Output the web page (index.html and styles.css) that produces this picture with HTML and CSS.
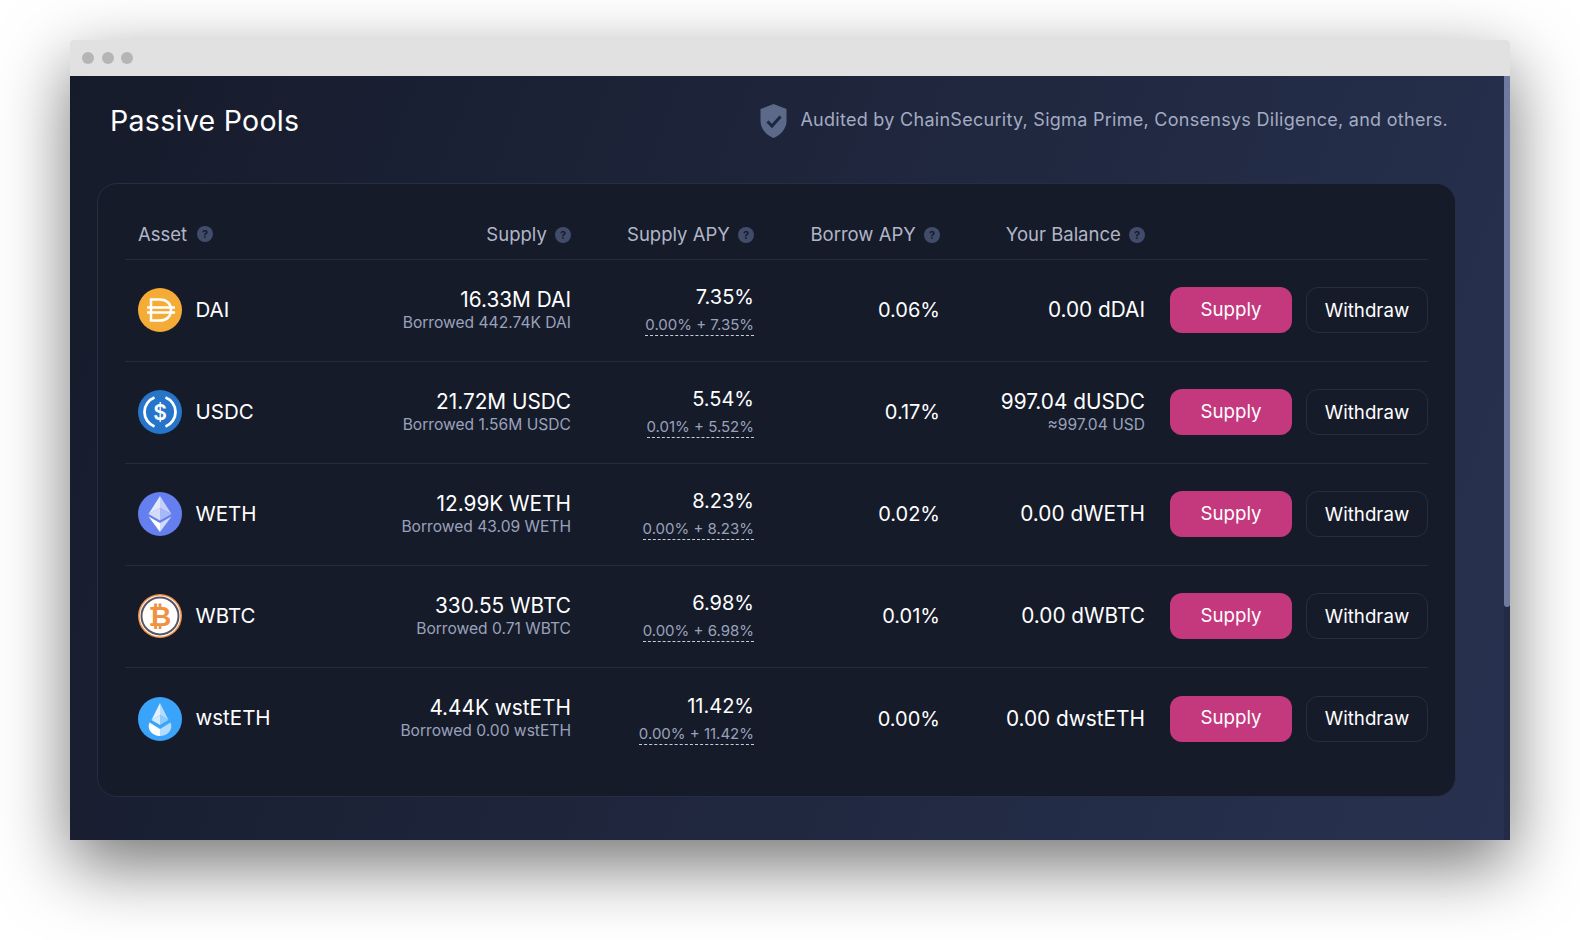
FILE: index.html

```html
<!doctype html>
<html lang="en">
<head>
    <meta charset="UTF-8">
    <title>Passive Pools</title>
    <link rel="stylesheet" href="styles.css">
</head>
<body>

<div class="window">
    <div class="titlebar">
        <span class="dot"></span>
        <span class="dot"></span>
        <span class="dot"></span>
    </div>

    <div class="viewport">
        <div class="content">
            <div class="page-head">
                <h1>Passive Pools</h1>
                <div class="audit">
                    <svg class="shield" viewBox="0 0 26 34">
                        <path d="M13 0 L26 5 V17 C26 25 20 31 13 34 C6 31 0 25 0 17 V5 Z" fill="#5c6989"/>
                        <path d="M7 17.5 L11.5 22 L20 12.5" fill="none" stroke="#1e2640" stroke-width="3"/>
                    </svg>
                    <span class="audit-text">Audited by ChainSecurity, Sigma Prime, Consensys Diligence, and others.</span>
                </div>
            </div>

            <div class="card">
                <div class="row head-row">
                    <div class="asset">Asset <span class="help">?</span></div>
                    <div class="num">Supply <span class="help">?</span></div>
                    <div class="num">Supply APY <span class="help">?</span></div>
                    <div class="num">Borrow APY <span class="help">?</span></div>
                    <div class="num">Your Balance <span class="help">?</span></div>
                    <div></div>
                </div>

                <div class="row">
                    <div class="asset">
                        <svg class="coin" viewBox="0 0 44 44">
                            <circle cx="22" cy="22" r="22" fill="#f5ac37"/>
                            <path d="M13 11.5 H22 C29 11.500 33 16 33 22 C33 28 29 32.500 22 32.500 H13 Z" fill="none" stroke="#fff" stroke-width="2.500"/>
                            <path d="M9 19.500 H37 M9 24.500 H37" stroke="#fff" stroke-width="2.500"/>
                        </svg>
                        <span class="name">DAI</span>
                    </div>
                    <div class="num"><div class="main">16.33M DAI</div><div class="sub">Borrowed 442.74K DAI</div></div>
                    <div class="num"><div class="main pct">7.35%</div><div class="sub apy"><span class="dashed">0.00% + 7.35%</span></div></div>
                    <div class="num"><div class="main pct">0.06%</div></div>
                    <div class="num"><div class="main">0.00 dDAI</div></div>
                    <div class="actions"><button class="btn supply">Supply</button><button class="btn withdraw">Withdraw</button></div>
                </div>

                <div class="row">
                    <div class="asset">
                        <svg class="coin" viewBox="0 0 44 44">
                            <circle cx="22" cy="22" r="22" fill="#2775ca"/>
                            <path d="M16.500 7.500 A15.500 15.500 0 0 0 16.500 36.500 M27.500 7.500 A15.500 15.500 0 0 1 27.500 36.500" fill="none" stroke="#fff" stroke-width="2.800"/>
                            <text x="22" y="29.500" text-anchor="middle" class="coin-dollar">$</text>
                        </svg>
                        <span class="name">USDC</span>
                    </div>
                    <div class="num"><div class="main">21.72M USDC</div><div class="sub">Borrowed 1.56M USDC</div></div>
                    <div class="num"><div class="main pct">5.54%</div><div class="sub apy"><span class="dashed">0.01% + 5.52%</span></div></div>
                    <div class="num"><div class="main pct">0.17%</div></div>
                    <div class="num"><div class="main">997.04 dUSDC</div><div class="sub">≈997.04 USD</div></div>
                    <div class="actions"><button class="btn supply">Supply</button><button class="btn withdraw">Withdraw</button></div>
                </div>

                <div class="row">
                    <div class="asset">
                        <svg class="coin" viewBox="0 0 44 44">
                            <circle cx="22" cy="22" r="22" fill="#6580ee"/>
                            <path d="M22 4 V16 L10.500 22 Z" fill="#e4e9fc"/>
                            <path d="M22 4 V16 L33.500 22 Z" fill="#c4cffa"/>
                            <path d="M22 16 L10.500 22 L22 28.500 Z" fill="#d5dcfb"/>
                            <path d="M22 16 L33.500 22 L22 28.500 Z" fill="#a9b8f6"/>
                            <path d="M10.500 24.500 L22 31 V40 Z" fill="#fff"/>
                            <path d="M33.500 24.500 L22 31 V40 Z" fill="#d3dbfb"/>
                        </svg>
                        <span class="name">WETH</span>
                    </div>
                    <div class="num"><div class="main">12.99K WETH</div><div class="sub">Borrowed 43.09 WETH</div></div>
                    <div class="num"><div class="main pct">8.23%</div><div class="sub apy"><span class="dashed">0.00% + 8.23%</span></div></div>
                    <div class="num"><div class="main pct">0.02%</div></div>
                    <div class="num"><div class="main">0.00 dWETH</div></div>
                    <div class="actions"><button class="btn supply">Supply</button><button class="btn withdraw">Withdraw</button></div>
                </div>

                <div class="row">
                    <div class="asset">
                        <svg class="coin" viewBox="0 0 44 44">
                            <circle cx="22" cy="22" r="22" fill="#f09242"/>
                            <circle cx="22" cy="22" r="20.500" fill="#fff"/>
                            <circle cx="22" cy="22" r="18.500" fill="none" stroke="#5a5564" stroke-width="2"/>
                            <text x="22" y="31.500" text-anchor="middle" class="coin-btc">₿</text>
                        </svg>
                        <span class="name">WBTC</span>
                    </div>
                    <div class="num"><div class="main">330.55 WBTC</div><div class="sub">Borrowed 0.71 WBTC</div></div>
                    <div class="num"><div class="main pct">6.98%</div><div class="sub apy"><span class="dashed">0.00% + 6.98%</span></div></div>
                    <div class="num"><div class="main pct">0.01%</div></div>
                    <div class="num"><div class="main">0.00 dWBTC</div></div>
                    <div class="actions"><button class="btn supply">Supply</button><button class="btn withdraw">Withdraw</button></div>
                </div>

                <div class="row last-row">
                    <div class="asset">
                        <svg class="coin" viewBox="0 0 44 44">
                            <circle cx="22" cy="22" r="22" fill="#3aa4fa"/>
                            <path d="M22 6 V18 L13.500 23 Z" fill="#e3f2fe"/>
                            <path d="M22 6 V18 L30.500 23 Z" fill="#b3dcfd"/>
                            <path d="M22 18 L13.500 23 L22 28 Z" fill="#d3ebfe"/>
                            <path d="M22 18 L30.500 23 L22 28 Z" fill="#8fcbfc"/>
                            <path d="M11.500 25.500 L22 32 V39 C14 39 8.500 32 11.500 25.500 Z" fill="#fff"/>
                            <path d="M32.500 25.500 L22 32 V39 C30 39 35.500 32 32.500 25.500 Z" fill="#b3dcfd"/>
                        </svg>
                        <span class="name">wstETH</span>
                    </div>
                    <div class="num"><div class="main">4.44K wstETH</div><div class="sub">Borrowed 0.00 wstETH</div></div>
                    <div class="num"><div class="main pct">11.42%</div><div class="sub apy"><span class="dashed">0.00% + 11.42%</span></div></div>
                    <div class="num"><div class="main pct">0.00%</div></div>
                    <div class="num"><div class="main">0.00 dwstETH</div></div>
                    <div class="actions"><button class="btn supply">Supply</button><button class="btn withdraw">Withdraw</button></div>
                </div>
            </div>
        </div>

        <div class="scrollbar"><div class="thumb"></div></div>
    </div>
</div>

</body>
</html>
```

FILE: styles.css

```css
* {
    box-sizing: border-box;
}
html, body {
    height: 100%;
}
body {
    margin: 0;
    padding: 40px 70px 0;
    overflow: hidden;
    background: #fff;
    font-family: Inter, "Liberation Sans", sans-serif;
    color: #fff;
}

.window {
    height: 800px;
    border-radius: 4px 4px 0 0;
    box-shadow: 0 25px 70px rgba(0, 0, 0, .55);
    display: flex;
    flex-direction: column;
}
.titlebar {
    height: 36px;
    flex: none;
    padding-left: 12px;
    display: flex;
    align-items: center;
    gap: 7.500px;
    background: #e1e1e1;
    border-radius: 4px 4px 0 0;
}
.dot {
    width: 12px;
    height: 12px;
    border-radius: 50%;
    background: #b5b5b5;
}

.viewport {
    flex: 1;
    display: flex;
    background: linear-gradient(110deg, #161b2b 0%, #283250 100%);
}
.content {
    flex: 1;
    padding: 0 48px 0 27px;
}
.scrollbar {
    width: 6px;
    flex: none;
    background: rgba(0, 0, 0, .12);
}
.thumb {
    height: 531px;
    background: #6f7a9f;
    border-radius: 0 0 3px 3px;
}

.page-head {
    height: 90px;
    margin-bottom: 17px;
    padding: 0 8px 0 13px;
    display: flex;
    align-items: center;
    justify-content: space-between;
}
h1 {
    margin: 0 0 2px;
    font-size: 28.500px;
    font-weight: 400;
    letter-spacing: .3px;
}
.audit {
    display: flex;
    align-items: center;
    gap: 13px;
    font-size: 18px;
    letter-spacing: .28px;
    color: #a4abc2;
}
.audit-text {
    margin-bottom: 4px;
}
.shield {
    width: 27px;
    height: 34px;
}

.card {
    height: 614px;
    padding: 0 27px 0 27px;
    background: #161b2a;
    border: 1px solid #272d42;
    border-radius: 20px;
}
.row {
    height: 102px;
    padding: 0 0 1px 13px;
    display: grid;
    grid-template-columns: 200px 233px 183px 186px 205px 283px;
    align-items: center;
    border-bottom: 1px solid #252b40;
}
.head-row {
    height: 76px;
    padding: 24px 0 0 13px;
    font-size: 18.500px;
    color: #b1b6c7;
}
.last-row {
    border-bottom: 0;
}

.asset {
    display: flex;
    align-items: center;
}
.coin {
    width: 44px;
    height: 44px;
    margin-right: 13.500px;
}
.coin-dollar {
    font-family: Inter, sans-serif;
    font-size: 21px;
    font-weight: 600;
    fill: #fff;
}
.coin-btc {
    font-family: "DejaVu Sans", sans-serif;
    font-size: 28px;
    font-weight: 700;
    fill: #f09242;
}
.name {
    margin-bottom: 2px;
    font-size: 20.500px;
}
.num {
    text-align: right;
}
.main {
    font-size: 20.800px;
    line-height: 24px;
}
.pct {
    font-size: 20px;
}
.sub {
    margin-top: 1px;
    font-size: 15.600px;
    line-height: 20px;
    color: #9aa2bb;
}
.apy {
    margin-top: 6px;
    font-size: 15px;
}
.dashed {
    padding-bottom: 1px;
    border-bottom: 1px dashed #c8cddc;
}
.help {
    display: inline-block;
    width: 16px;
    height: 16px;
    margin-left: 3px;
    border-radius: 50%;
    background: #414c6b;
    color: #161b2a;
    font-size: 11px;
    font-weight: 700;
    line-height: 16px;
    text-align: center;
    vertical-align: 2px;
}
.asset .help {
    margin-left: 10px;
}

.actions {
    display: flex;
    justify-content: flex-end;
    gap: 14px;
}
.btn {
    width: 122px;
    height: 46px;
    padding: 0;
    border-radius: 12px;
    font-family: inherit;
    font-size: 18.700px;
    color: #fff;
}
.supply {
    padding-bottom: 2px;
    border: 0;
    background: #c4387d;
}
.withdraw {
    border: 1px solid #272d42;
    background: transparent;
}
```
